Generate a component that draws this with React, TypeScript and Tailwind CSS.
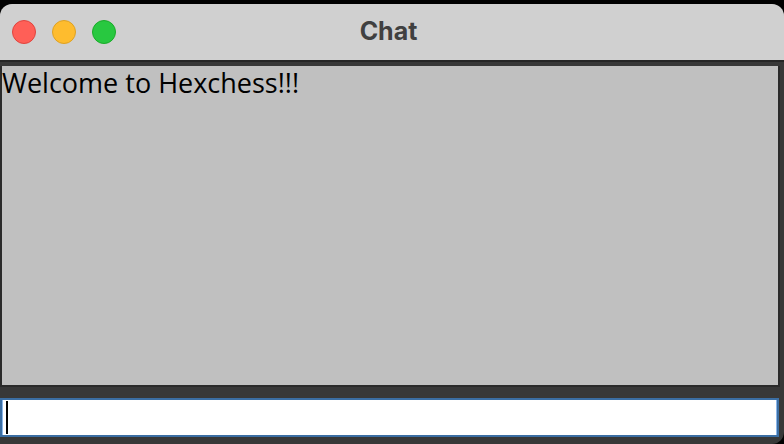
import { useState } from 'react'

export default function App() {
  const [msg, setMsg] = useState('')

  return (
    <div className="h-[444px] w-[784px] overflow-hidden bg-black pt-[4px]">
      <div className="flex h-[440px] flex-col overflow-hidden rounded-t-[12px] rounded-br-[12px] bg-[#383838]">
        {/* Barra de título */}
        <div className="relative flex h-[56px] shrink-0 items-center bg-[#d0d0d0] px-[12px]">
          <div className="flex gap-[16px]">
            <span className="h-[24px] w-[24px] rounded-full border border-[#e0443e] bg-[#ff5f57]" />
            <span className="h-[24px] w-[24px] rounded-full border border-[#dea123] bg-[#febc2e]" />
            <span className="h-[24px] w-[24px] rounded-full border border-[#1aab29] bg-[#28c840]" />
          </div>
          <div className="absolute inset-x-0 top-0 flex h-[55px] items-center justify-center pr-[7px]">
            <span className="font-['Inter',sans-serif] text-[25px] font-bold text-[#404040]">Chat</span>
          </div>
        </div>

        {/* Área de mensajes */}
        <div className="h-[6px] shrink-0 border-t-2 border-[#262626]" />
        <div className="h-[321px] w-[780px] shrink-0 border-x-2 border-b-2 border-[#2a2a2a] bg-[#c0c0c0]">
          <p className="font-['Open_Sans',sans-serif] text-[27px] leading-[34px] text-black">Welcome to Hexchess!!!</p>
        </div>

        {/* Entrada */}
        <div className="mt-[11px] w-[779px] border-2 border-[#3b6ea3] bg-white">
          <div className="relative h-[35px] border-l border-r border-[#8bb6ea]">
            <span className="absolute left-[3px] top-[1px] h-[33px] w-[2px] bg-black" />
            <input
              value={msg}
              onChange={(e) => setMsg(e.target.value)}
              className="h-full w-full bg-transparent pl-[8px] font-['Open_Sans',sans-serif] text-[18px] outline-none"
            />
          </div>
        </div>
      </div>
    </div>
  )
}
